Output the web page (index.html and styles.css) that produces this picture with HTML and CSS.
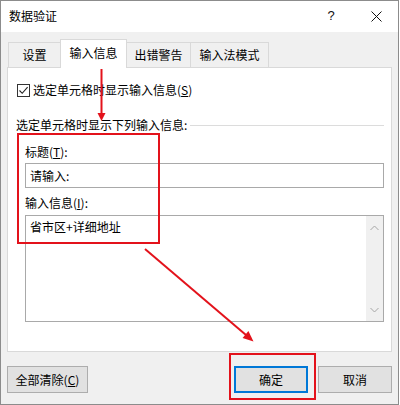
FILE: index.html
```html
<!DOCTYPE html>
<html lang="zh">
<head>
<meta charset="utf-8">
<title>数据验证</title>
<link rel="stylesheet" href="styles.css">
</head>
<body>
<div class="window">
  <div class="titlebar">
    <span class="title">数据验证</span>
    <div class="caption-btns">
      <span class="cap-help">?</span>
      <span class="cap-close">
        <svg width="11" height="11" viewBox="0 0 11 11"><path d="M0.5 0.5 L10.5 10.5 M10.5 0.5 L0.5 10.5" stroke="#111" stroke-width="1" fill="none"/></svg>
      </span>
    </div>
  </div>
  <div class="content">
    <div class="tabs">
      <div class="tab">设置</div>
      <div class="tab active">输入信息</div>
      <div class="tab">出错警告</div>
      <div class="tab">输入法模式</div>
    </div>
    <div class="panel">
      <div class="check-row">
        <span class="checkbox">
          <svg width="13" height="13" viewBox="0 0 13 13"><path d="M2.5 6.5 L5.2 9.3 L10.6 3.2" stroke="#222" stroke-width="1.1" fill="none"/></svg>
        </span>
        <span>选定单元格时显示输入信息(<u>S</u>)</span>
      </div>
      <div class="section-label"><span>选定单元格时显示下列输入信息:</span></div>
      <div class="fields">
        <div class="field-label">标题(<u>T</u>):</div>
        <div class="input">请输入:</div>
        <div class="field-label second">输入信息(<u>I</u>):</div>
        <div class="textarea">
          <div class="ta-text">省市区+详细地址</div>
          <div class="scrollbar">
            <svg width="9" height="6" viewBox="0 0 9 6"><path d="M0.5 5 L4.5 1 L8.5 5" stroke="#a6a6a6" stroke-width="1" fill="none"/></svg>
            <svg width="9" height="6" viewBox="0 0 9 6"><path d="M0.5 1 L4.5 5 L8.5 1" stroke="#a6a6a6" stroke-width="1" fill="none"/></svg>
          </div>
        </div>
      </div>
    </div>
    <div class="buttons">
      <div class="btn wide">全部清除(<u>C</u>)</div>
      <div class="btn-group">
        <div class="btn default">确定</div>
        <div class="btn">取消</div>
      </div>
    </div>
  </div>
  <svg class="annotations" width="400" height="405" viewBox="0 0 400 405">
    <g fill="none" stroke="#e3121b" stroke-width="2">
      <rect x="61" y="40" width="65" height="27"/>
      <rect x="18" y="134" width="141" height="109"/>
      <rect x="230" y="354" width="85" height="45"/>
      <line x1="101.5" y1="69" x2="101.5" y2="114"/>
      <line x1="145" y1="249" x2="246" y2="335"/>
    </g>
    <g fill="#e3121b">
      <polygon points="97.5,113 105.5,113 101.5,121"/>
      <polygon points="242.6,338 248.4,331 253.5,341.5"/>
    </g>
  </svg>
</div>
</body>
</html>
```

FILE: styles.css
```css
html, body {
  margin: 0;
  padding: 0;
}

body {
  width: 400px;
  height: 405px;
  background: #ffffff;
  font-family: "Noto Sans CJK SC", "Noto Sans", sans-serif;
  font-size: 12px;
  line-height: 16px;
  color: #000;
  overflow: hidden;
}

u {
  text-decoration: underline;
  text-underline-offset: 1px;
}

.window {
  position: relative;
  width: 399px;
  height: 405px;
  box-sizing: border-box;
  border: 1px solid #8c8c8c;
  background: #f0f0f0;
  display: flex;
  flex-direction: column;
}

.titlebar {
  height: 31px;
  flex: none;
  background: #ffffff;
  display: flex;
  align-items: flex-start;
  padding-left: 8px;
}

.title {
  margin-top: 7px;
}

.caption-btns {
  margin-left: auto;
  display: flex;
  height: 31px;
}

.cap-help {
  width: 46px;
  text-align: center;
  font-family: "Liberation Sans", sans-serif;
  font-size: 13px;
  line-height: 16px;
  padding-top: 7px;
  box-sizing: border-box;
  color: #111;
}

.cap-close {
  width: 44px;
  display: flex;
  justify-content: center;
  padding-top: 10px;
  box-sizing: border-box;
}

.content {
  flex: 1;
  padding-top: 7px;
  display: flex;
  flex-direction: column;
}

.tabs {
  height: 28px;
  margin-left: 7px;
  display: flex;
  align-items: flex-end;
}

.tab {
  height: 25px;
  box-sizing: border-box;
  border: 1px solid #d9d9d9;
  border-bottom: none;
  background: #f0f0f0;
  display: flex;
  align-items: center;
  justify-content: center;
  margin-left: -1px;
}

.tab:first-child {
  margin-left: 0;
  width: 53px;
}

.tab:nth-child(2) {
  width: 67px;
}

.tab:nth-child(3) {
  width: 65px;
}

.tab:nth-child(4) {
  width: 79px;
}

.tab.active {
  height: 29px;
  background: #ffffff;
  margin-bottom: -1px;
  position: relative;
  z-index: 1;
  padding-bottom: 2px;
}

.panel {
  margin-left: 6px;
  width: 385px;
  height: 285px;
  box-sizing: border-box;
  border: 1px solid #d9d9d9;
  background: #ffffff;
  display: flex;
  flex-direction: column;
}

.check-row {
  margin-top: 14px;
  padding-left: 9px;
  display: flex;
  align-items: center;
  height: 16px;
}

.checkbox {
  width: 13px;
  height: 13px;
  box-sizing: border-box;
  border: 1px solid #333333;
  margin-right: 3px;
  display: flex;
  align-items: center;
  justify-content: center;
  background: #fff;
}

.checkbox svg {
  flex: none;
}

.section-label {
  margin-top: 19px;
  padding-left: 8px;
  padding-right: 7px;
  display: flex;
  align-items: center;
  height: 16px;
}

.section-label::after {
  content: "";
  flex: 1;
  margin-left: 3px;
  margin-top: 0px;
  border-top: 1px solid #dcdcdc;
}

.fields {
  padding-left: 17px;
  padding-right: 7px;
  display: flex;
  flex-direction: column;
}

.field-label {
  margin-top: 11px;
  height: 16px;
}

.field-label.second {
  margin-top: 7px;
}

.input {
  margin-top: 3px;
  height: 25px;
  box-sizing: border-box;
  border: 1px solid #a9a9a9;
  padding-left: 4px;
  display: flex;
  align-items: center;
}

.textarea {
  margin-top: 4px;
  height: 107px;
  box-sizing: border-box;
  border: 1px solid #a9a9a9;
  display: flex;
}

.ta-text {
  flex: 1;
  padding-left: 4px;
  padding-top: 3px;
}

.scrollbar {
  width: 17px;
  background: #f0f0f0;
  display: flex;
  flex-direction: column;
  justify-content: space-between;
  align-items: center;
  padding: 9px 0 8px;
}

.buttons {
  margin-top: 14px;
  padding-left: 6px;
  padding-right: 6px;
  display: flex;
  justify-content: space-between;
}

.btn-group {
  display: flex;
  gap: 10px;
}

.btn {
  width: 74px;
  height: 27px;
  box-sizing: border-box;
  border: 1px solid #adadad;
  background: #e1e1e1;
  display: flex;
  align-items: center;
  justify-content: center;
}

.btn.wide {
  width: 81px;
}

.btn.default {
  border: 2px solid #0078d7;
}

.annotations {
  position: absolute;
  left: -1px;
  top: -1px;
  pointer-events: none;
}
```
